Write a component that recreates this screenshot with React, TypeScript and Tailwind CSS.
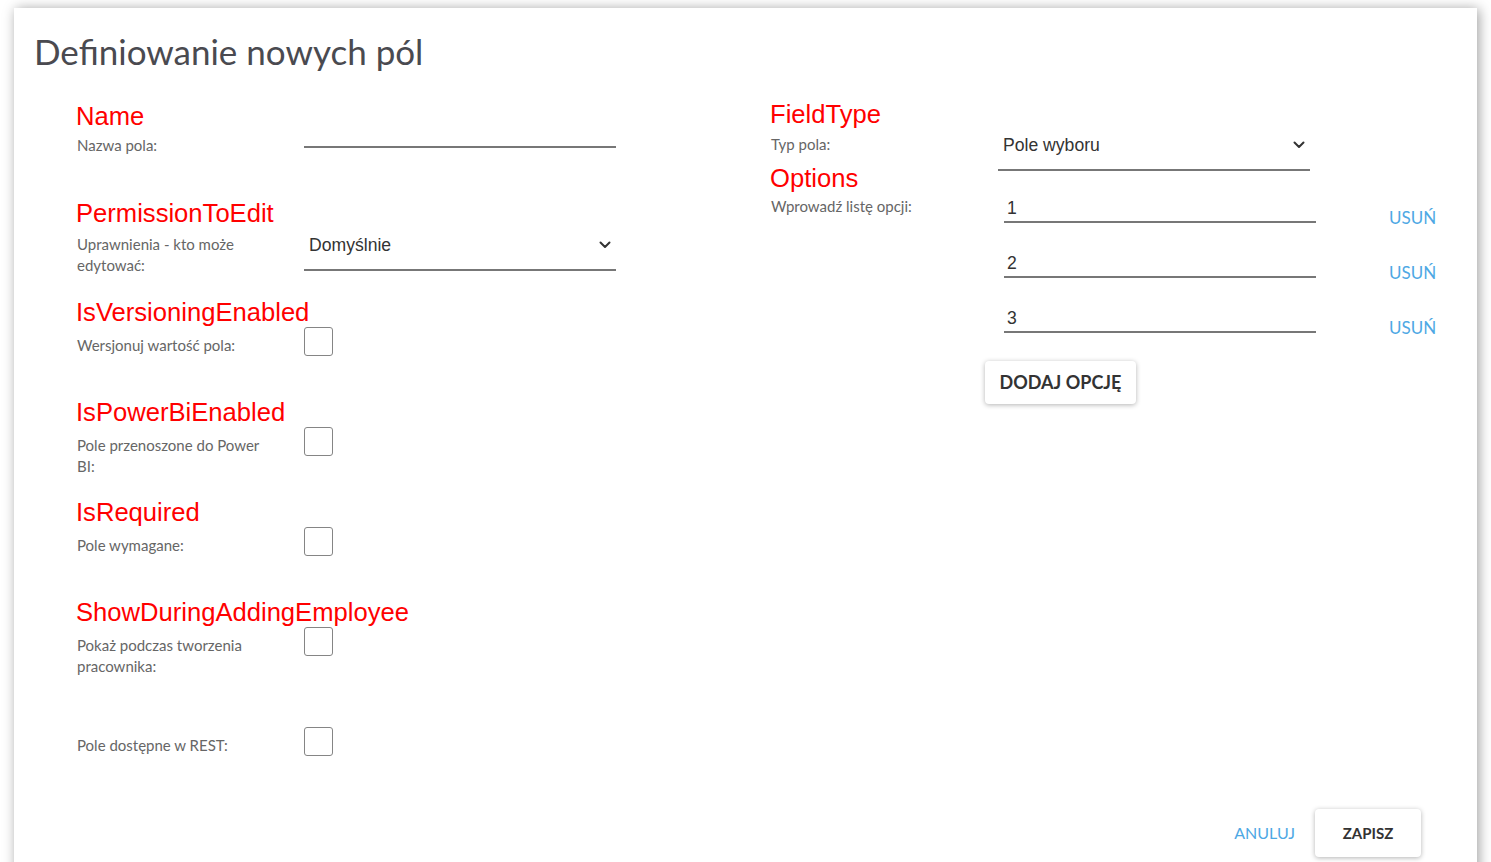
import React from 'react';

const lato = "font-['Lato','Noto_Sans',sans-serif]";
const arial = "font-['Liberation_Sans','Arial',sans-serif]";

function Chevron() {
  return (
    <svg width="12" height="8" viewBox="0 0 12 8" fill="none" className="text-[#333]">
      <path d="M1.5 1.5 L6 6 L10.5 1.5" stroke="currentColor" strokeWidth="2" strokeLinecap="round" strokeLinejoin="round" />
    </svg>
  );
}

function RedLabel({ children }: { children?: React.ReactNode }) {
  return (
    <div className={`${arial} h-[29px] whitespace-nowrap text-[25.6px] leading-[29px] text-[#ff0000]`}>
      {children}
    </div>
  );
}

function FieldLabel({ children, top = 'pt-[8px]' }: { children: React.ReactNode; top?: string }) {
  return (
    <div className={`${lato} ${top} w-[200px] pl-[1px] text-[15px] leading-[21px] text-[#666]`}>{children}</div>
  );
}

function Select({ value }: { value: string }) {
  return (
    <div className="flex h-[43px] w-[312px] items-start justify-between border-b-2 border-[#777] pl-[5px] pr-[5px] pt-[6px]">
      <span className={`${arial} text-[17.6px] leading-[22px] text-[#333]`}>{value}</span>
      <span className="pt-[7px]">
        <Chevron />
      </span>
    </div>
  );
}

function Checkbox() {
  return <div className="h-[29px] w-[29px] rounded-[3px] border-[1.5px] border-[#858585] bg-white" />;
}

function CheckGroup({ title, label }: { title?: string; label: React.ReactNode }) {
  return (
    <div className="h-[100px]">
      <RedLabel>{title}</RedLabel>
      <div className="flex">
        <div className="w-[228px]">
          <FieldLabel>{label}</FieldLabel>
        </div>
        <Checkbox />
      </div>
    </div>
  );
}

function OptionRow({ value }: { value: string }) {
  return (
    <div className="flex h-[55px] items-start">
      <div className="h-[31px] w-[312px] border-b-2 border-[#777] pl-[3px] pt-[4px]">
        <span className={`${arial} text-[17.6px] leading-[22px] text-[#333]`}>{value}</span>
      </div>
      <button className={`${lato} ml-[73px] mt-[14px] text-[17px] leading-[24px] text-[#4ea8e4]`}>USUŃ</button>
    </div>
  );
}

export default function App() {
  return (
    <div className="h-[862px] overflow-hidden bg-white px-[14px] pt-[8px]">
      <div className="h-[900px] bg-white shadow-[2px_1px_12px_rgba(0,0,0,0.38)]">
        <h1 className={`${lato} pl-[20px] pt-[22px] text-[35px] leading-[43px] text-[#4a4a50]`}>
          Definiowanie nowych pól
        </h1>

        <div className="flex pl-[62px]">
          {/* lewa kolumna */}
          <div className="w-[694px] pt-[29px]">
            <div className="h-[97px]">
              <RedLabel>Name</RedLabel>
              <div className="flex">
                <div className="w-[228px]">
                  <FieldLabel top="pt-[4px]">Nazwa pola:</FieldLabel>
                </div>
                <div className="h-[17px] w-[312px] border-b-2 border-[#777]" />
              </div>
            </div>

            <div className="h-[99px]">
              <RedLabel>PermissionToEdit</RedLabel>
              <div className="flex">
                <div className="w-[228px]">
                  <FieldLabel top="pt-[6px]">
                    Uprawnienia - kto może
                    <br />
                    edytować:
                  </FieldLabel>
                </div>
                <Select value="Domyślnie" />
              </div>
            </div>

            <CheckGroup title="IsVersioningEnabled" label="Wersjonuj wartość pola:" />
            <CheckGroup
              title="IsPowerBiEnabled"
              label={
                <>
                  Pole przenoszone do Power
                  <br />
                  BI:
                </>
              }
            />
            <CheckGroup title="IsRequired" label="Pole wymagane:" />
            <CheckGroup
              title="ShowDuringAddingEmployee"
              label={
                <>
                  Pokaż podczas tworzenia
                  <br />
                  pracownika:
                </>
              }
            />
            <CheckGroup label="Pole dostępne w REST:" />
          </div>

          {/* prawa kolumna */}
          <div className="pt-[27px]">
            <div className="h-[64px]">
              <RedLabel>FieldType</RedLabel>
              <div className="flex h-[35px]">
                <div className="w-[228px]">
                  <FieldLabel top="pt-[5px]">Typ pola:</FieldLabel>
                </div>
                <div className="-mt-[1px]">
                  <Select value="Pole wyboru" />
                </div>
              </div>
            </div>

            <RedLabel>Options</RedLabel>
            <div className="-mt-[1px] flex">
              <div className="w-[234px]">
                <FieldLabel top="pt-[4px]">Wprowadź listę opcji:</FieldLabel>
              </div>
              <div>
                <OptionRow value="1" />
                <OptionRow value="2" />
                <OptionRow value="3" />
              </div>
            </div>

            <button
              className={`${lato} ml-[215px] mt-[4px] h-[43px] w-[151px] rounded-[4px] bg-white text-[18px] font-bold text-[#333] shadow-[0_1px_5px_rgba(0,0,0,0.3)]`}
            >
              DODAJ OPCJĘ
            </button>
          </div>
        </div>

        <div className="mt-[11px] flex items-center justify-end pr-[56px]">
          <button className={`${lato} mr-[20px] text-[16px] leading-[24px] text-[#4ea8e4]`}>ANULUJ</button>
          <button
            className={`${lato} h-[48px] w-[106px] rounded-[4px] bg-white text-[15px] font-bold text-[#333] shadow-[0_1px_5px_rgba(0,0,0,0.3)]`}
          >
            ZAPISZ
          </button>
        </div>
      </div>
    </div>
  );
}
